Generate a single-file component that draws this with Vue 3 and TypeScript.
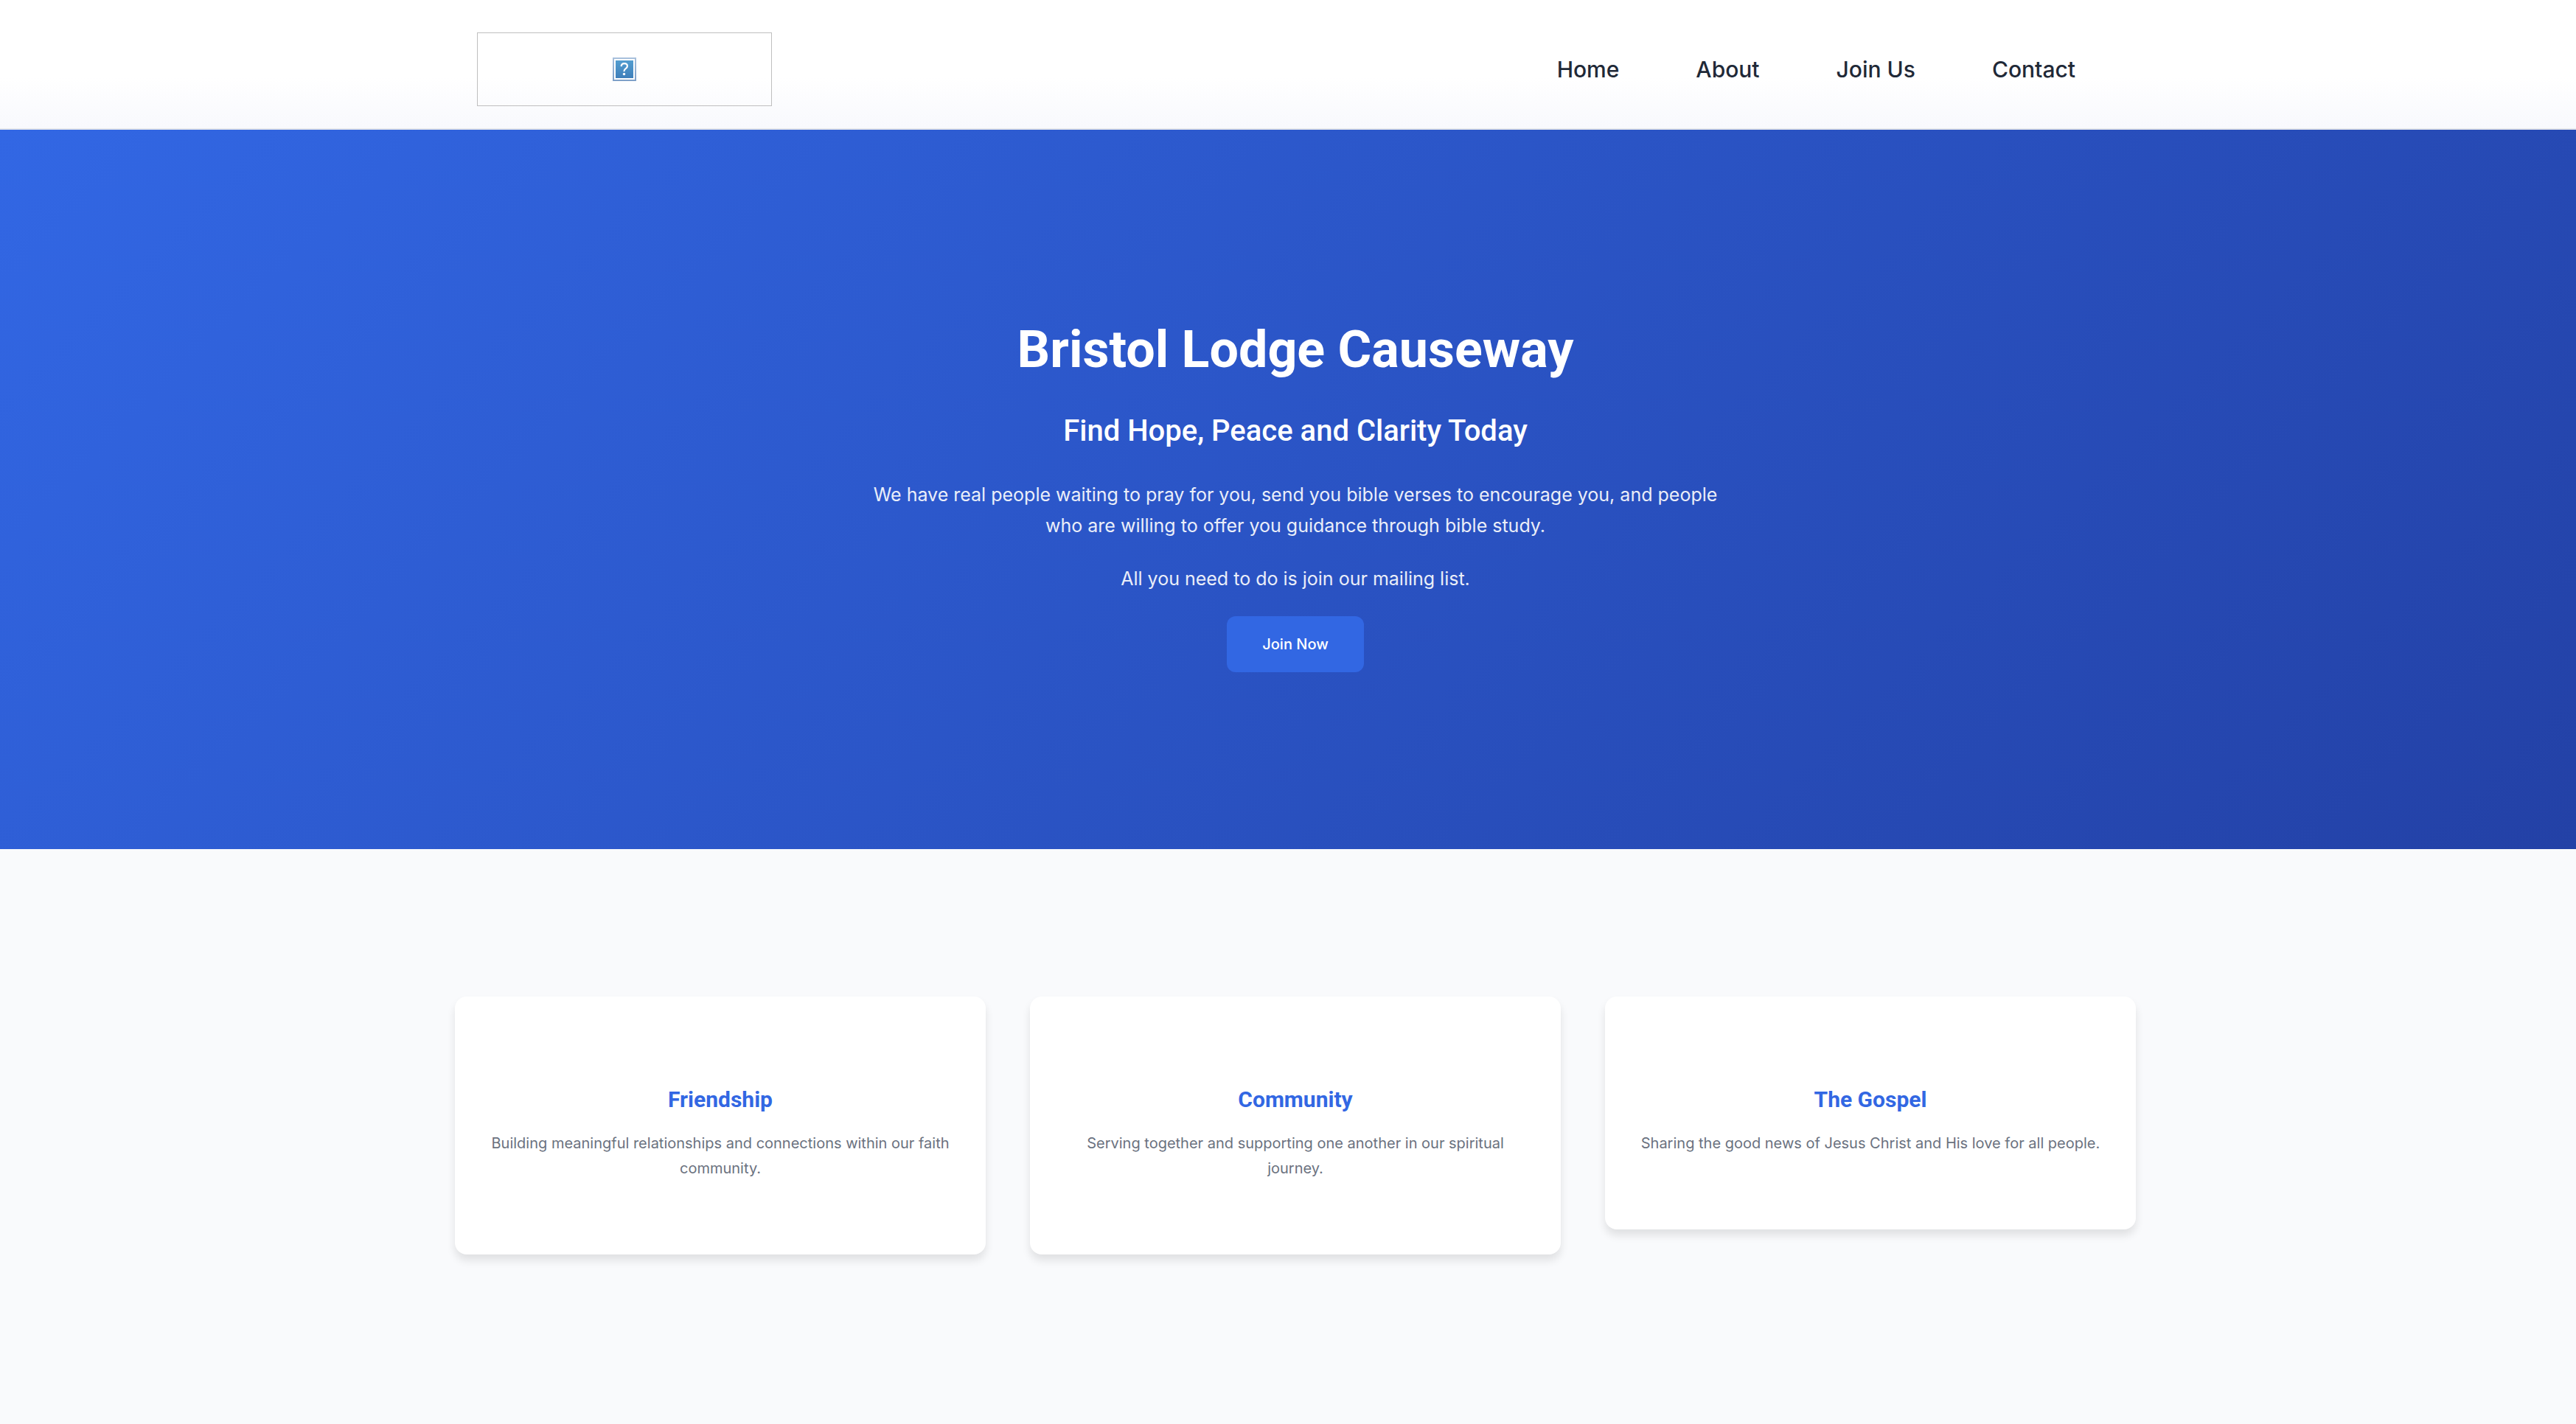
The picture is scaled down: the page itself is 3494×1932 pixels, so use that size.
<script setup lang="ts">
interface NavLink {
  label: string
  href: string
}

interface Feature {
  title: string
  text: string
}

const links: NavLink[] = [
  { label: 'Home', href: '#home' },
  { label: 'About', href: '#about' },
  { label: 'Join Us', href: '#join' },
  { label: 'Contact', href: '#contact' },
]

const features: Feature[] = [
  {
    title: 'Friendship',
    text: 'Building meaningful relationships and connections within our faith community.',
  },
  {
    title: 'Community',
    text: 'Serving together and supporting one another in our spiritual journey.',
  },
  {
    title: 'The Gospel',
    text: 'Sharing the good news of Jesus Christ and His love for all people.',
  },
]
</script>

<template>
  <div class="page">
    <header class="header">
      <div class="container header-row">
        <a class="logo" href="#home" aria-label="Bristol Lodge Causeway">
          <svg width="32" height="32" viewBox="0 0 32 32" aria-hidden="true">
            <defs>
              <linearGradient id="frame" x1="0" y1="0" x2="0" y2="1">
                <stop offset="0" stop-color="#a9c1dd" />
                <stop offset="1" stop-color="#7d9fc8" />
              </linearGradient>
              <linearGradient id="tile" x1="0" y1="0" x2="0" y2="1">
                <stop offset="0" stop-color="#529dd0" />
                <stop offset="1" stop-color="#3f7fba" />
              </linearGradient>
            </defs>
            <rect width="32" height="32" fill="url(#frame)" />
            <rect x="2" y="2" width="28" height="28" fill="#fff" />
            <rect x="4" y="4" width="24" height="24" fill="url(#tile)" />
            <path
              d="M11.6 12.2C11.8 9.6 13.4 8.2 15.8 8.2C18.2 8.2 19.9 9.6 19.9 11.7C19.9 13.3 19.1 14.2 17.6 15.2C16.1 16.2 15.4 17 15.4 18.9"
              fill="none"
              stroke="#fff"
              stroke-width="2.2"
            />
            <circle cx="15.5" cy="22.5" r="1.7" fill="#fff" />
          </svg>
        </a>
        <nav class="nav" aria-label="Main">
          <a v-for="link in links" :key="link.label" class="nav-link" :href="link.href">{{ link.label }}</a>
        </nav>
      </div>
    </header>

    <main>
      <section class="hero">
        <h1 class="hero-title">Bristol Lodge Causeway</h1>
        <h2 class="hero-subtitle">Find Hope, Peace and Clarity Today</h2>
        <p class="hero-text">
          We have real people waiting to pray for you, send you bible verses to encourage you, and
          people who are willing to offer you guidance through bible study.
        </p>
        <p class="hero-text">All you need to do is join our mailing list.</p>
        <button class="hero-button" type="button">Join Now</button>
      </section>

      <section class="features">
        <div class="container feature-row">
          <article v-for="feature in features" :key="feature.title" class="card">
            <h3 class="card-title">{{ feature.title }}</h3>
            <p class="card-text">{{ feature.text }}</p>
          </article>
        </div>
      </section>
    </main>
  </div>
</template>

<style>
body {
  background: #f9fafc;
}
</style>

<style scoped>
.page {
  font-family: Inter, 'Liberation Sans', sans-serif;
  color: #1f2937;
}

.page *,
.page {
  box-sizing: border-box;
}

.container {
  width: 100%;
  max-width: 2280px;
  margin: 0 auto;
}

.header,
.hero,
.features {
  padding-left: 20px;
}

.header {
  padding-top: 44px;
  padding-bottom: 30px;
  border-bottom: 2px solid #e5e7eb;
  background: linear-gradient(180deg, #fff 60%, #f8f9fd 100%);
}

.header-row {
  display: flex;
  align-items: center;
  justify-content: space-between;
  padding: 0 30px;
}

.logo {
  display: flex;
  align-items: center;
  justify-content: center;
  width: 400px;
  height: 100px;
  border: 1px solid #bfbfbf;
}

.nav {
  display: flex;
}

.nav-link {
  padding: 0 52px;
  font-size: 30px;
  font-weight: 500;
  line-height: 48px;
  color: #1f2937;
  text-decoration: none;
}

.hero {
  display: flex;
  flex-direction: column;
  align-items: center;
  padding-top: 240px;
  padding-bottom: 240px;
  background: linear-gradient(135deg, #3267e4 0%, #2341a6 100%);
  color: #fff;
  text-align: center;
}

.hero-title {
  margin: 0 0 18px;
  font-family: Roboto, sans-serif;
  font-size: 70px;
  font-weight: 700;
  line-height: 116px;
}

.hero-subtitle {
  margin: 0 0 30px;
  font-family: Roboto, sans-serif;
  font-size: 40px;
  font-weight: 500;
  line-height: 70px;
}

.hero-text {
  max-width: 1200px;
  margin: 0 0 30px;
  font-size: 25px;
  font-weight: 400;
  line-height: 42px;
  opacity: 0.9;
}

.hero-button {
  height: 76px;
  padding: 0 48px;
  border: 0;
  border-radius: 12px;
  background: #3267e3;
  color: #fff;
  font-family: inherit;
  font-size: 20px;
  font-weight: 500;
  line-height: 32px;
}

.features {
  padding-top: 200px;
  padding-bottom: 200px;
}

.feature-row {
  display: grid;
  grid-template-columns: repeat(3, 1fr);
  align-items: start;
  gap: 60px;
}

.card {
  padding: 112px 48px 100px;
  border-radius: 16px;
  background: #fff;
  box-shadow: 0 8px 12px rgba(0, 0, 0, 0.1);
  text-align: center;
}

.card-title {
  margin: 0 0 14px;
  font-family: Roboto, sans-serif;
  font-size: 30px;
  font-weight: 700;
  line-height: 56px;
  color: #3267e3;
}

.card-text {
  margin: 0;
  font-size: 20px;
  line-height: 34px;
  color: #6b7280;
}
</style>
